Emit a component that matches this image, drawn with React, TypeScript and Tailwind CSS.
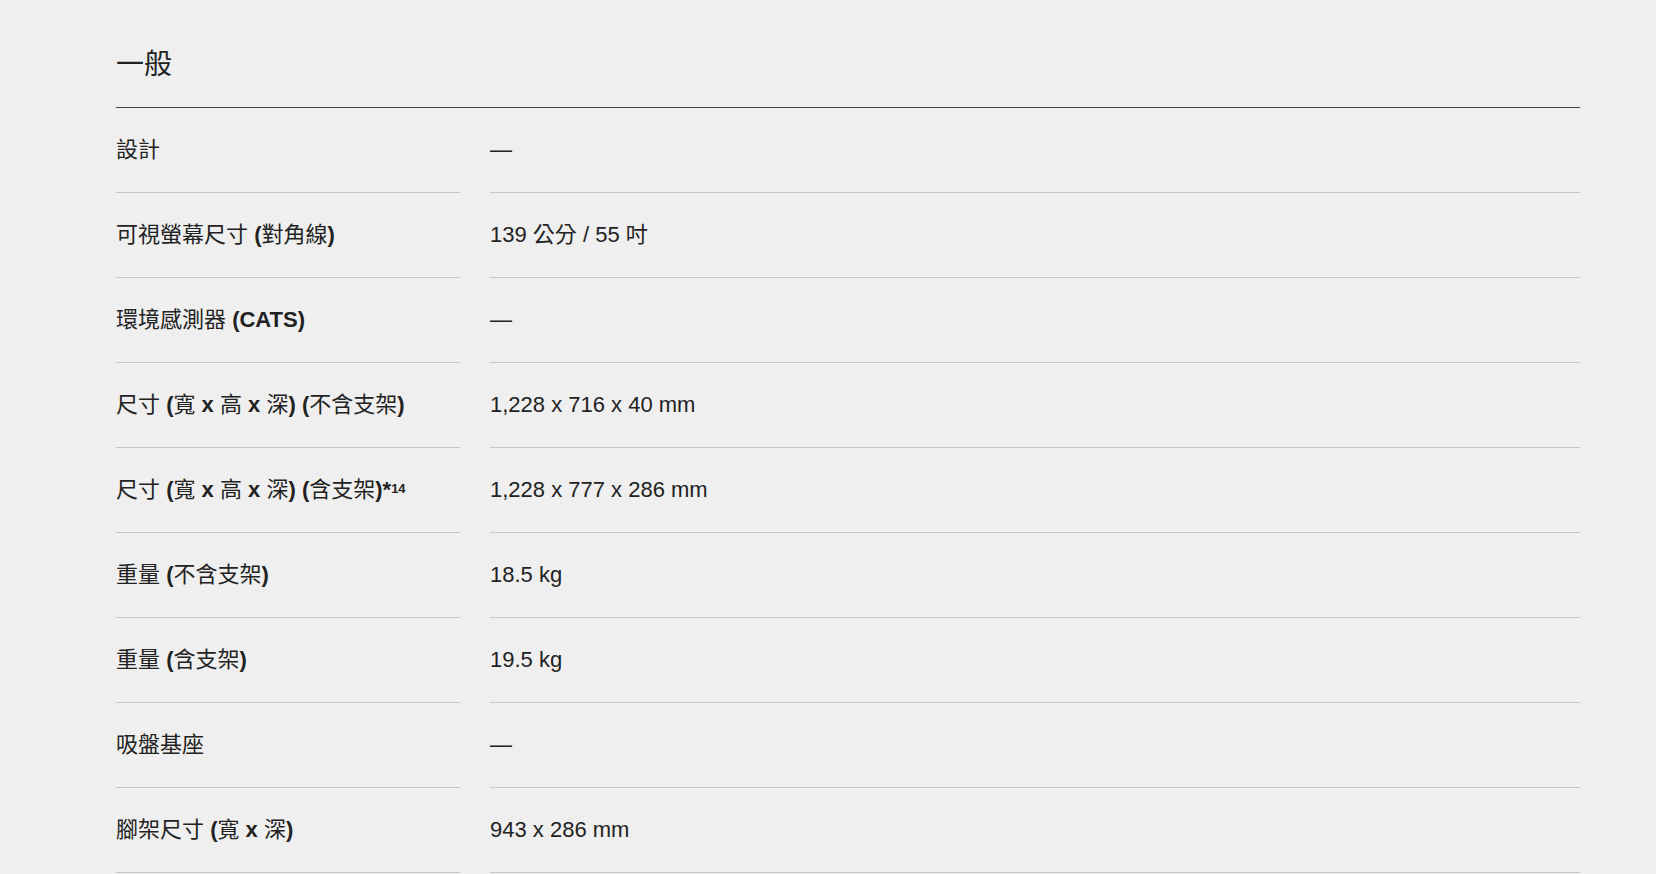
import React from "react";

type Row = { label: React.ReactNode; value: string };

const FONT = {
  fontFamily: '"Liberation Sans", "Noto Sans CJK TC", "Noto Sans", sans-serif',
};

function Mixed({ text }: { text: string }) {
  const parts = text.split(/([\u3400-\u9fff\u3000-\u303f\uff00-\uffef]+)/);
  return (
    <>
      {parts.map((p, i) =>
        /[\u3400-\u9fff]/.test(p) ? (
          <span key={i} className="font-normal">
            {p}
          </span>
        ) : (
          <span key={i} className="font-bold">
            {p}
          </span>
        )
      )}
    </>
  );
}

const rows: Row[] = [
  { label: <Mixed text="設計" />, value: "—" },
  { label: <Mixed text="可視螢幕尺寸 (對角線)" />, value: "139 公分 / 55 吋" },
  { label: <Mixed text="環境感測器 (CATS)" />, value: "—" },
  { label: <Mixed text="尺寸 (寬 x 高 x 深) (不含支架)" />, value: "1,228 x 716 x 40 mm" },
  {
    label: (
      <>
        <Mixed text="尺寸 (寬 x 高 x 深) (含支架)*" />
        <sup className="font-bold text-[13px] relative -top-[4px]">14</sup>
      </>
    ),
    value: "1,228 x 777 x 286 mm",
  },
  { label: <Mixed text="重量 (不含支架)" />, value: "18.5 kg" },
  { label: <Mixed text="重量 (含支架)" />, value: "19.5 kg" },
  { label: <Mixed text="吸盤基座" />, value: "—" },
  { label: <Mixed text="腳架尺寸 (寬 x 深)" />, value: "943 x 286 mm" },
];

export default function App() {
  return (
    <div className="min-h-screen w-full bg-[#efefef] text-[#222222]" style={FONT}>
      <div className="pl-[116px] pt-[44px] w-[1580px]">
        <h2 className="text-[28px] leading-[42px] font-normal mb-[21px]">一般</h2>
        <div className="border-t border-[#444444]">
          {rows.map((r, i) => (
            <div key={i} className="flex gap-[30px]">
              <div className="w-[344px] h-[85px] border-b border-[#c6c6c6] flex items-center text-[22px] leading-[30px]">
                <div>{r.label}</div>
              </div>
              <div className="flex-1 h-[85px] border-b border-[#c6c6c6] flex items-center text-[22px] leading-[30px]">
                {r.value}
              </div>
            </div>
          ))}
        </div>
      </div>
    </div>
  );
}
